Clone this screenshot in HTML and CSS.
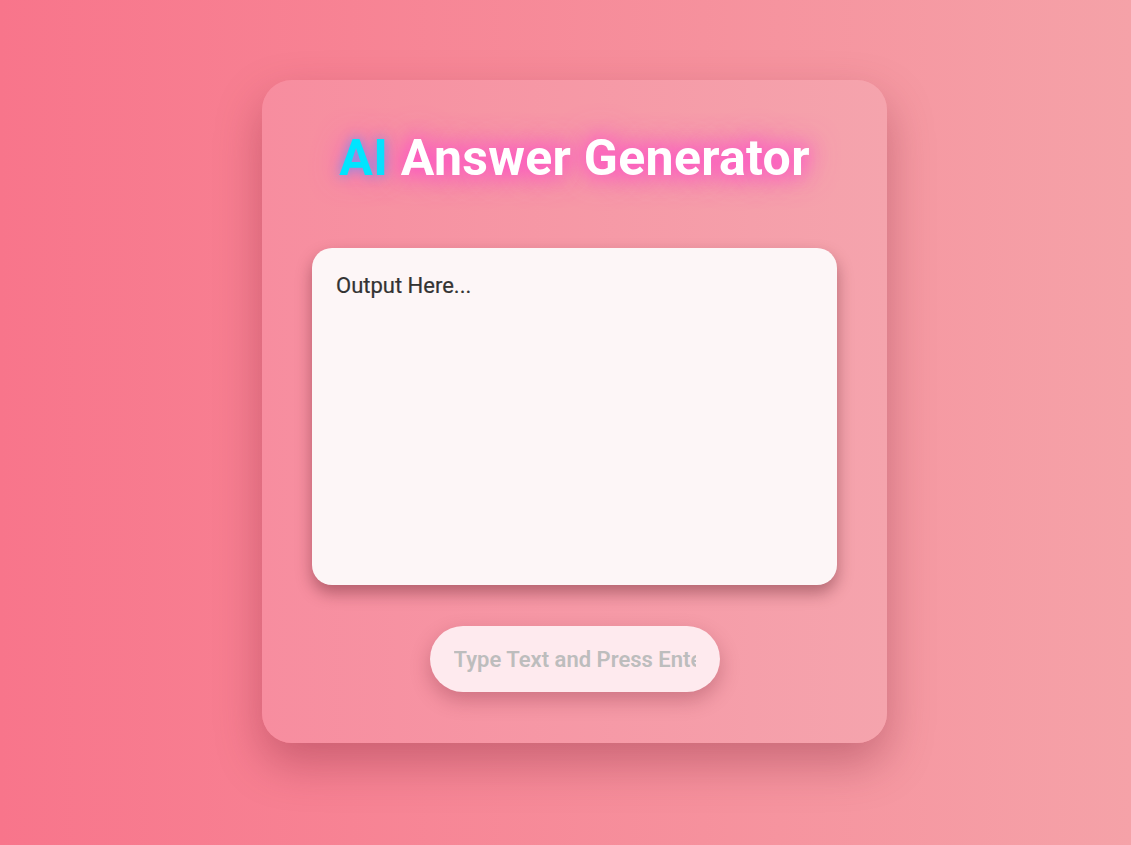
FILE: index.html
```html
<!DOCTYPE html>
<html lang="en">
<head>
<meta charset="utf-8">
<title>AI Answer Generator</title>
<link rel="stylesheet" href="styles.css">
</head>
<body>
<main class="card">
  <h1 class="title"><span class="ai">AI</span> Answer Generator</h1>
  <div class="output">Output Here...</div>
  <input class="prompt" type="text" placeholder="Type Text and Press Enter">
</main>
</body>
</html>
```
FILE: styles.css
```css
* { box-sizing: border-box; }
html, body { height: 100%; }
body {
  margin: 0;
  font-family: Roboto, "Noto Sans", Arial, sans-serif;
  background: linear-gradient(to right, #f8758b, #f5a2a8);
  display: flex;
  justify-content: center;
  align-items: flex-start;
  padding-top: 80px;
  padding-left: 18px;
}
.card {
  width: 625px;
  height: 663px;
  border-radius: 30px;
  padding: 50px;
  background: linear-gradient(to right, #f78d9f, #f5a4ad);
  box-shadow: 0 20px 45px rgba(120, 30, 50, 0.35);
  display: flex;
  flex-direction: column;
  align-items: center;
}
.title {
  margin: 0;
  font-size: 50px;
  font-weight: 700;
  line-height: 56px;
  letter-spacing: 0.3px;
  color: #fff;
  text-shadow: 0 0 18px #ff4acb, 0 0 32px #ff4acb;
}
.ai {
  color: #00e5ff;
  text-shadow: 0 0 12px rgba(80, 150, 255, 0.8), 0 0 30px #ff4acb;
}
.output {
  margin-top: 62px;
  width: 525px;
  height: 337px;
  background: #fdf6f7;
  border-radius: 20px;
  padding: 24px;
  font-size: 22px;
  font-weight: 400;
  line-height: 28px;
  color: #333;
  -webkit-text-stroke: 0.2px #333;
  box-shadow: 0 8px 16px rgba(80, 20, 30, 0.4);
}
.prompt {
  margin-top: 41px;
  width: 290px;
  height: 66px;
  border: none;
  outline: none;
  border-radius: 33px;
  background: #feeaee;
  padding: 0 24px;
  font-family: inherit;
  font-size: 22px;
  font-weight: 600;
  color: #555;
  box-shadow: 0 8px 20px rgba(100, 20, 40, 0.28);
}
.prompt::placeholder { color: #bdbdbd; }
```
